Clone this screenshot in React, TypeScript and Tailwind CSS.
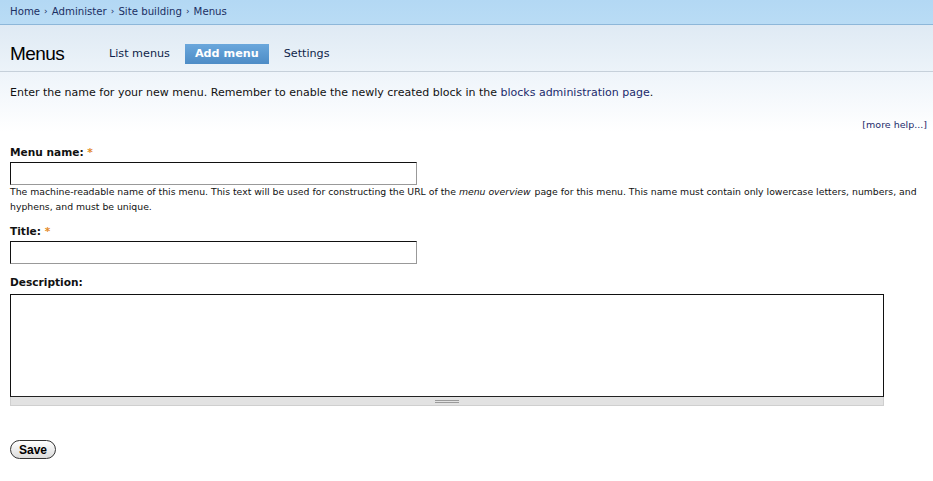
export default function App() {
  return (
    <div className="min-h-screen bg-white text-[#111] font-['DejaVu_Sans',Verdana,sans-serif]">
      {/* breadcrumb */}
      <div className="h-[25px] bg-gradient-to-b from-[#b3d8f4] to-[#b9dcf5] border-b border-[#8db7d9] px-[10px] flex items-center text-[10.2px] text-[#1b2f63]">
        <span>Home</span>
        <span className="mx-[4px] text-[9px]">›</span>
        <span>Administer</span>
        <span className="mx-[4px] text-[9px]">›</span>
        <span>Site building</span>
        <span className="mx-[4px] text-[9px]">›</span>
        <span>Menus</span>
      </div>

      {/* title + tabs */}
      <div className="h-[47px] bg-gradient-to-b from-[#dfeaf4] to-[#ecf3f9] border-b border-[#c6d0da] px-[10px] pt-[12px] flex items-center">
        <h1 className="font-['Liberation_Sans',Arial,sans-serif] text-[19px] text-black w-[99px] tracking-[-0.6px]">Menus</h1>
        <div className="flex items-center text-[11.2px] text-[#0f1f4a]">
          <span>List menus</span>
          <span className="ml-[15px] h-[20px] px-[10px] flex items-center bg-gradient-to-b from-[#6aa7dc] to-[#4d8cc6] text-white font-bold">Add menu</span>
          <span className="ml-[15px]">Settings</span>
        </div>
      </div>

      {/* content */}
      <div className="bg-gradient-to-b from-[#eef4fa] to-white to-[60px] px-[10px] pt-[13px]">
        <p className="text-[11px] leading-[16px]">
          Enter the name for your new menu. Remember to enable the newly created block in the{" "}
          <span className="text-[#1b2a6b]">blocks administration page</span>.
        </p>
        <div className="mt-[17px] -mr-[4px] flex justify-end text-[9.5px] leading-[14px] text-[#1b2a6b]">[more help...]</div>

        <div className="mt-[13px]">
          <label className="block text-[10.6px] font-bold leading-[14px]">
            Menu name: <span className="text-[#e38a27]">*</span>
          </label>
          <div className="mt-[3px] w-[407px] h-[23px] border border-[#111] border-b-[#999] border-r-[#999]" />
          <p className="-mt-[1px] text-[9.3px] leading-[15px] text-[#111]">
            The machine-readable name of this menu. This text will be used for constructing the URL of the{" "}
            <em className="pr-[1px]">menu overview</em> page for this menu. This name must contain only lowercase letters, numbers, and hyphens, and must be unique.
          </p>
        </div>

        <div className="mt-[10px]">
          <label className="block text-[10.6px] font-bold leading-[14px]">
            Title: <span className="text-[#e38a27]">*</span>
          </label>
          <div className="mt-[3px] w-[407px] h-[23px] border border-[#111] border-b-[#999] border-r-[#999]" />
        </div>

        <div className="mt-[11px]">
          <label className="block text-[10.6px] font-bold leading-[14px]">Description:</label>
          <div className="mt-[5px] w-[874px]">
            <div className="h-[103px] border border-[#111] border-b-[#222]" />
            <div className="h-[9px] bg-[#e2e2e2] border-x border-b border-[#cfcfcf] flex items-center justify-center">
              <div className="w-[24px] h-[3px] border-y border-[#9a9a9a]" />
            </div>
          </div>
        </div>

        <div className="mt-[34px] pb-[20px] flex">
          <button className="h-[19px] px-[8px] rounded-full border border-[#333] bg-gradient-to-b from-white to-[#dcdcdc] text-[12px] leading-none text-black font-['Liberation_Sans',Arial,sans-serif] font-bold">
            Save
          </button>
        </div>
      </div>
    </div>
  );
}
